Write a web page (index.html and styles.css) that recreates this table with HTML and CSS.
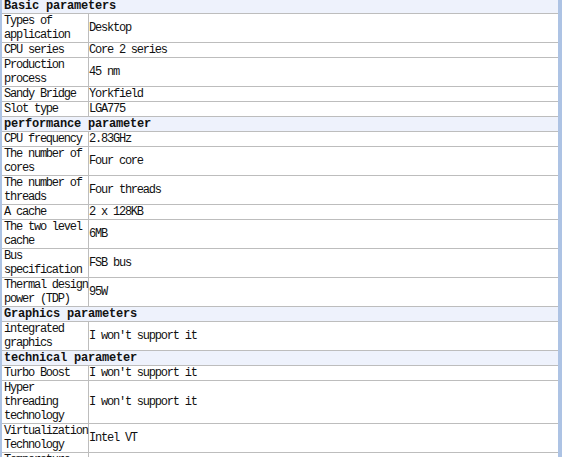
FILE: index.html
```html
<!DOCTYPE html>
<html lang="en">
<head>
    <meta charset="UTF-8">
    <meta name="viewport" content="width=device-width, initial-scale=1.0">
    <title>CPU parameters</title>

    <link rel="stylesheet" href="styles.css">
</head>
<body>
    <main class="frame">
        <table class="specs">
            <colgroup>
                <col class="col-label">
                <col>
            </colgroup>
            <tbody>
                <tr class="group"><th colspan="2">Basic parameters</th></tr>
                <tr><td class="label">Types of application</td><td>Desktop</td></tr>
                <tr><td class="label">CPU series</td><td>Core 2 series</td></tr>
                <tr><td class="label">Production process</td><td>45 nm</td></tr>
                <tr><td class="label">Sandy Bridge</td><td>Yorkfield</td></tr>
                <tr><td class="label">Slot type</td><td>LGA775</td></tr>

                <tr class="group"><th colspan="2">performance parameter</th></tr>
                <tr><td class="label">CPU frequency</td><td>2.83GHz</td></tr>
                <tr><td class="label">The number of cores</td><td>Four core</td></tr>
                <tr><td class="label">The number of threads</td><td>Four threads</td></tr>
                <tr><td class="label">A cache</td><td>2 x 128KB</td></tr>
                <tr><td class="label">The two level cache</td><td>6MB</td></tr>
                <tr><td class="label">Bus specification</td><td>FSB bus</td></tr>
                <tr><td class="label">Thermal design power (TDP)</td><td>95W</td></tr>

                <tr class="group"><th colspan="2">Graphics parameters</th></tr>
                <tr><td class="label">integrated graphics</td><td>I won't support it</td></tr>

                <tr class="group"><th colspan="2">technical parameter</th></tr>
                <tr><td class="label">Turbo Boost</td><td>I won't support it</td></tr>
                <tr><td class="label">Hyper threading technology</td><td>I won't support it</td></tr>
                <tr><td class="label">Virtualization Technology</td><td>Intel VT</td></tr>
                <tr><td class="label">Temperature monitoring</td><td>Support</td></tr>
            </tbody>
        </table>
    </main>
</body>
</html>
```

FILE: styles.css
```css
* {
    box-sizing: content-box;
}

html, body {
    margin: 0;
    padding: 0;
    overflow: hidden;
    background-color: white;
}

.frame {
    display: block;
    min-height: 100vh;
    border-left: 2px solid #adc3e4;
    border-right: 4px solid #adc3e4;
}

.specs {
    width: 556px;
    margin-top: -1px;
    border-collapse: separate;
    border-spacing: 0;
    table-layout: fixed;
    font-family: "Liberation Mono", monospace;
    font-size: 12px;
    line-height: 14px;
    letter-spacing: -1.22px;
    color: #111;
}

.col-label {
    width: 87px;
}

.specs td,
.specs th {
    padding: 0;
    border-bottom: 1px solid #bdbdbd;
    vertical-align: middle;
    text-align: left;
    font-weight: normal;
}

.specs td.label {
    padding-left: 2px;
    border-right: 1px solid #bdbdbd;
}

.group th {
    padding-left: 2px;
    font-weight: bold;
    letter-spacing: -0.2px;
    background-color: #eef2fc;
}
```
